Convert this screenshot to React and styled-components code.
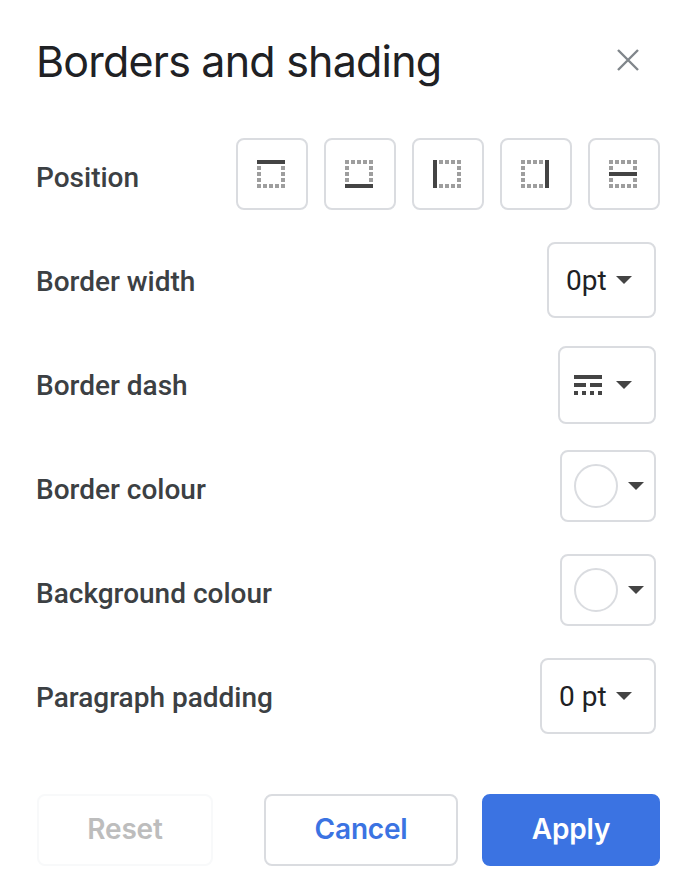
import styled, { createGlobalStyle } from 'styled-components';

const GlobalStyle = createGlobalStyle`
  html, body {
    margin: 0;
    background: #fff;
  }

  * {
    box-sizing: border-box;
  }
`;

const Dialog = styled.div`
  width: 691px;
  height: 888px;
  padding: 28px 31px 22px 36px;
  font-family: Roboto, "Liberation Sans", sans-serif;
`;

const Header = styled.header`
  height: 98px;
  display: flex;
  justify-content: space-between;
  align-items: flex-start;
`;

const Title = styled.h1`
  margin: 0;
  font-family: Inter, Roboto, sans-serif;
  font-size: 43px;
  font-weight: 400;
  line-height: 66px;
  letter-spacing: -0.8px;
  color: #202124;
`;

const CloseButton = styled.button`
  width: 24px;
  height: 24px;
  margin: 20px 20px 0 0;
  padding: 0;
  border: 0;
  background: none;
  color: #80868b;

  svg {
    display: block;
  }
`;

const Row = styled.div`
  height: 104px;
  padding-top: 12px;
  display: flex;
  justify-content: space-between;
  align-items: flex-start;
`;

const Label = styled.span`
  height: 78px;
  display: flex;
  align-items: center;
  font-size: 28px;
  font-weight: 500;
  color: #3c4043;
`;

const PositionGroup = styled.div`
  display: flex;
  gap: 16px;
`;

const PositionButton = styled.button`
  width: 72px;
  height: 72px;
  padding: 0 2px 0 0;
  display: flex;
  justify-content: center;
  align-items: center;
  background: #fff;
  border: 2px solid #dadce0;
  border-radius: 8px;
`;

const Dropdown = styled.button`
  width: ${(p) => p.$width}px;
  height: ${(p) => p.$height}px;
  margin-right: 4px;
  padding: 0 ${(p) => p.$end}px 0 ${(p) => p.$start}px;
  display: flex;
  justify-content: space-between;
  align-items: center;
  background: #fff;
  border: 2px solid #dadce0;
  border-radius: 8px;
  font-family: Roboto, sans-serif;
  font-size: 28px;
  color: #202124;
`;

const Swatch = styled.span`
  width: 44px;
  height: 44px;
  border: 2px solid #dadce0;
  border-radius: 50%;
  background: #fff;
`;

const Caret = styled.span`
  width: 0;
  height: 0;
  border-left: 8px solid transparent;
  border-right: 8px solid transparent;
  border-top: 8px solid #444;
`;

const Footer = styled.footer`
  margin-top: 44px;
  padding-left: 1px;
  display: flex;
  gap: 24px;
`;

const ActionButton = styled.button`
  width: ${(p) => p.$width}px;
  height: 72px;
  padding: 0 0 2px;
  border-radius: 8px;
  border: 2px solid ${(p) => p.$border};
  background: ${(p) => p.$background};
  color: ${(p) => p.$color};
  font-family: Inter, Roboto, sans-serif;
  font-size: 28px;
  font-weight: 600;
  letter-spacing: -0.2px;
`;

const ResetButton = styled(ActionButton)`
  margin-right: 27px;
`;

const dotPositions = [0, 6, 12, 18, 24];

const bars = {
  top: { x: 0, y: 0, width: 28, height: 4 },
  bottom: { x: 0, y: 24, width: 28, height: 4 },
  left: { x: 0, y: 0, width: 4, height: 28 },
  right: { x: 24, y: 0, width: 4, height: 28 },
  middle: { x: 0, y: 12, width: 28, height: 4 },
};

const BorderIcon = ({ side }) => (
  <svg width='28' height='28' viewBox='0 0 28 28' shapeRendering='crispEdges'>
    {dotPositions.map((pos) => (
      <g key={pos} fill='#9e9e9e'>
        <rect x={pos} y='0' width='4' height='4' />
        <rect x={pos} y='24' width='4' height='4' />
        <rect x='0' y={pos} width='4' height='4' />
        <rect x='24' y={pos} width='4' height='4' />
      </g>
    ))}
    <rect {...bars[side]} fill='#444' />
  </svg>
);

const DashIcon = () => (
  <svg width='28' height='20' viewBox='0 0 28 20' fill='#444' shapeRendering='crispEdges'>
    <rect x='0' y='0' width='28' height='4' />
    <rect x='0' y='8' width='12' height='4' />
    <rect x='16' y='8' width='12' height='4' />
    {[0, 8, 16, 24].map((x) => (
      <rect key={x} x={x} y='16' width='4' height='4' />
    ))}
  </svg>
);

const CloseIcon = () => (
  <svg width='24' height='24' viewBox='0 0 24 24' fill='none' stroke='currentColor' strokeWidth='2.4'>
    <path d='M2 2 L22 22 M22 2 L2 22' />
  </svg>
);

const App = () => (
  <Dialog>
    <GlobalStyle />
    <Header>
      <Title>Borders and shading</Title>
      <CloseButton aria-label='Close'>
        <CloseIcon />
      </CloseButton>
    </Header>
    <Row>
      <Label>Position</Label>
      <PositionGroup>
        {['top', 'bottom', 'left', 'right', 'middle'].map((side) => (
          <PositionButton key={side} aria-label={side}>
            <BorderIcon side={side} />
          </PositionButton>
        ))}
      </PositionGroup>
    </Row>
    <Row>
      <Label>Border width</Label>
      <Dropdown $width={109} $height={76} $start={17} $end={22}>
        0pt
        <Caret />
      </Dropdown>
    </Row>
    <Row>
      <Label>Border dash</Label>
      <Dropdown $width={98} $height={78} $start={14} $end={22}>
        <DashIcon />
        <Caret />
      </Dropdown>
    </Row>
    <Row>
      <Label>Border colour</Label>
      <Dropdown $width={96} $height={72} $start={12} $end={10}>
        <Swatch />
        <Caret />
      </Dropdown>
    </Row>
    <Row>
      <Label>Background colour</Label>
      <Dropdown $width={96} $height={72} $start={12} $end={10}>
        <Swatch />
        <Caret />
      </Dropdown>
    </Row>
    <Row>
      <Label>Paragraph padding</Label>
      <Dropdown $width={116} $height={76} $start={17} $end={22}>
        0 pt
        <Caret />
      </Dropdown>
    </Row>
    <Footer>
      <ResetButton $width={176} $border='#f8f9fa' $background='#fff' $color='#bdbdbd'>
        Reset
      </ResetButton>
      <ActionButton $width={194} $border='#dadce0' $background='#fff' $color='#3b73e2'>
        Cancel
      </ActionButton>
      <ActionButton $width={178} $border='#3b73e2' $background='#3b73e2' $color='#fff'>
        Apply
      </ActionButton>
    </Footer>
  </Dialog>
);

export default App;
